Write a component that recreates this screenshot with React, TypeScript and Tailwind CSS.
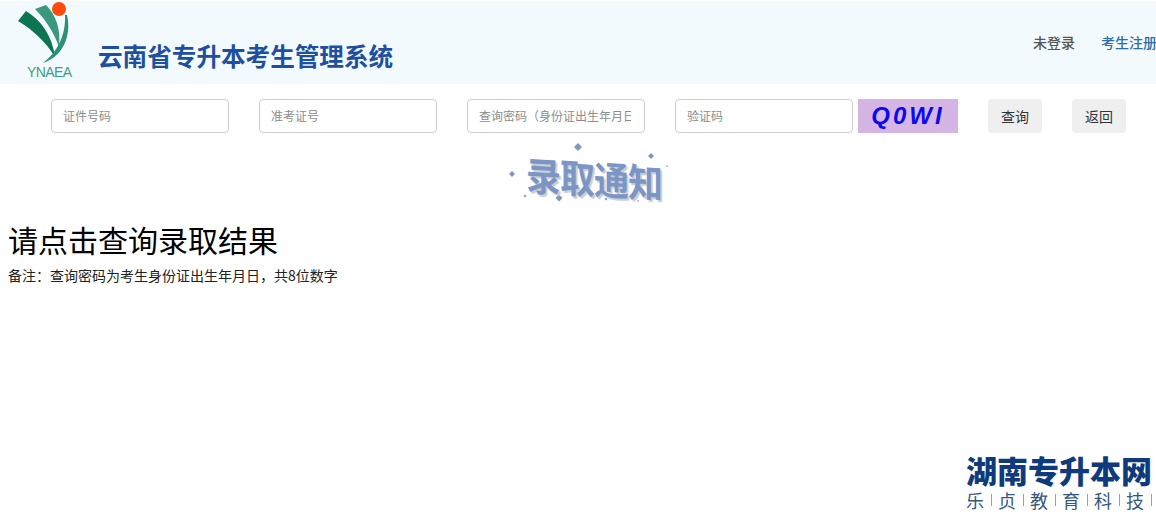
const FONT = "font-['Microsoft_YaHei','Noto_Sans_CJK_SC','Noto_Sans',sans-serif]";

const FIELDS = [
  "证件号码",
  "准考证号",
  "查询密码（身份证出生年月日）",
  "验证码",
];

function Logo() {
  return (
    <svg width="90" height="83" viewBox="0 0 90 83" className="shrink-0">
      <circle cx="59" cy="8" r="7" fill="#fb4a0e" />
      <path d="M18 20 L26 10 C41 19 52 34 55 56 C46 41 33 29 18 20 Z" fill="#0e7350" />
      <path d="M35 8 L46 4 C56 14 61 28 59 46 C54 31 45 18 35 8 Z" fill="#3a987e" />
      <path d="M67 14 C72 36 62 56 43 62 C56 52 66 36 65 14 Z" fill="#2f8f76" />
      <text x="27" y="76" fontSize="14" letterSpacing="-0.6" fill="#3f9c88" fontFamily="Liberation Sans, sans-serif">
        YNAEA
      </text>
    </svg>
  );
}

function Header() {
  return (
    <div className="mt-px h-[83px] flex bg-[#f3fafd] overflow-hidden">
      <Logo />
      <h1 className="ml-2 mt-[38px] text-[24.6px] leading-8 font-bold text-[#1f4f9f] whitespace-nowrap">
        云南省专升本考生管理系统
      </h1>
      <div className="ml-auto mt-[31px] mr-[-1px] flex gap-[26px] text-sm leading-5 font-medium whitespace-nowrap">
        <span className="text-[#555]">未登录</span>
        <span className="text-[#2f6ca3]">考生注册</span>
      </div>
    </div>
  );
}

function QueryForm() {
  return (
    <div className="mt-[15px] ml-[51px] flex items-stretch h-[34px]">
      {FIELDS.map((f, i) => (
        <input
          key={f}
          placeholder={f}
          className={`w-[178px] border border-[#ccc] rounded pl-[11px] pr-[13px] text-xs bg-white outline-none placeholder:text-[#8c8c8c] ${
            i < 3 ? "mr-[30px]" : "mr-[5px]"
          }`}
        />
      ))}
      <div className="w-[100px] bg-[#d5b5e4] flex items-center justify-center font-['Liberation_Sans',sans-serif] text-2xl font-bold italic tracking-[3px] text-[#0a0af0]">
        Q0WI
      </div>
      <button className="ml-[30px] w-[54px] bg-[#efefef] rounded text-sm text-[#333]">查询</button>
      <button className="ml-[30px] w-[54px] bg-[#efefef] rounded text-sm text-[#333]">返回</button>
    </div>
  );
}

function Sparkles() {
  const dots = [
    [78, 4, 4], [151, 13, 3], [12, 31, 3], [167, 23, 1], [25, 53, 1.5],
    [59, 55, 3.5], [106, 56, 1.5], [138, 58, 1],
  ];
  return (
    <svg width="180" height="64" viewBox="0 0 180 64" className="absolute left-0 top-0">
      {dots.map(([x, y, r]) => (
        <path
          key={`${x}-${y}`}
          d={`M${x} ${y - r} L${x + r} ${y} L${x} ${y + r} L${x - r} ${y} Z`}
          fill="#7f98bf"
        />
      ))}
    </svg>
  );
}

function NoticeBanner() {
  return (
    <div className="relative mt-[10px] ml-[500px] w-[180px] h-[74px]">
      <Sparkles />
      <div className="absolute left-[26px] top-[8px] text-[35px] leading-10 font-bold tracking-[-1px] text-[#7b95c4] whitespace-nowrap [text-shadow:2px_2px_1px_#c9cdd6] origin-top-left skew-y-3 scale-y-[1.12]">
        录取通知
      </div>
    </div>
  );
}

function Footer() {
  return (
    <div className="mt-auto mr-1 mb-px self-end w-[186px]">
      <div className="text-[31px] leading-[35px] font-black text-[#0f3a7c] whitespace-nowrap">湖南专升本网</div>
      <div className="flex justify-between items-center text-lg leading-[26px] text-[#33577f]">
        {["乐", "贞", "教", "育", "科", "技"].map((c) => (
          <span key={c} className="flex items-center gap-[7px]">
            {c}
            <span className="w-px h-3 bg-[#8fa3bb]" />
          </span>
        ))}
      </div>
    </div>
  );
}

export default function App() {
  return (
    <div className={`${FONT} h-[514px] w-[1156px] flex flex-col bg-white text-black overflow-hidden`}>
      <Header />
      <QueryForm />
      <NoticeBanner />
      <h2 className="mt-[2px] ml-2 text-[30px] leading-10 font-normal">请点击查询录取结果</h2>
      <p className="mt-[6px] ml-2 text-sm leading-5 text-[#222]">备注：查询密码为考生身份证出生年月日，共8位数字</p>
      <Footer />
    </div>
  );
}
